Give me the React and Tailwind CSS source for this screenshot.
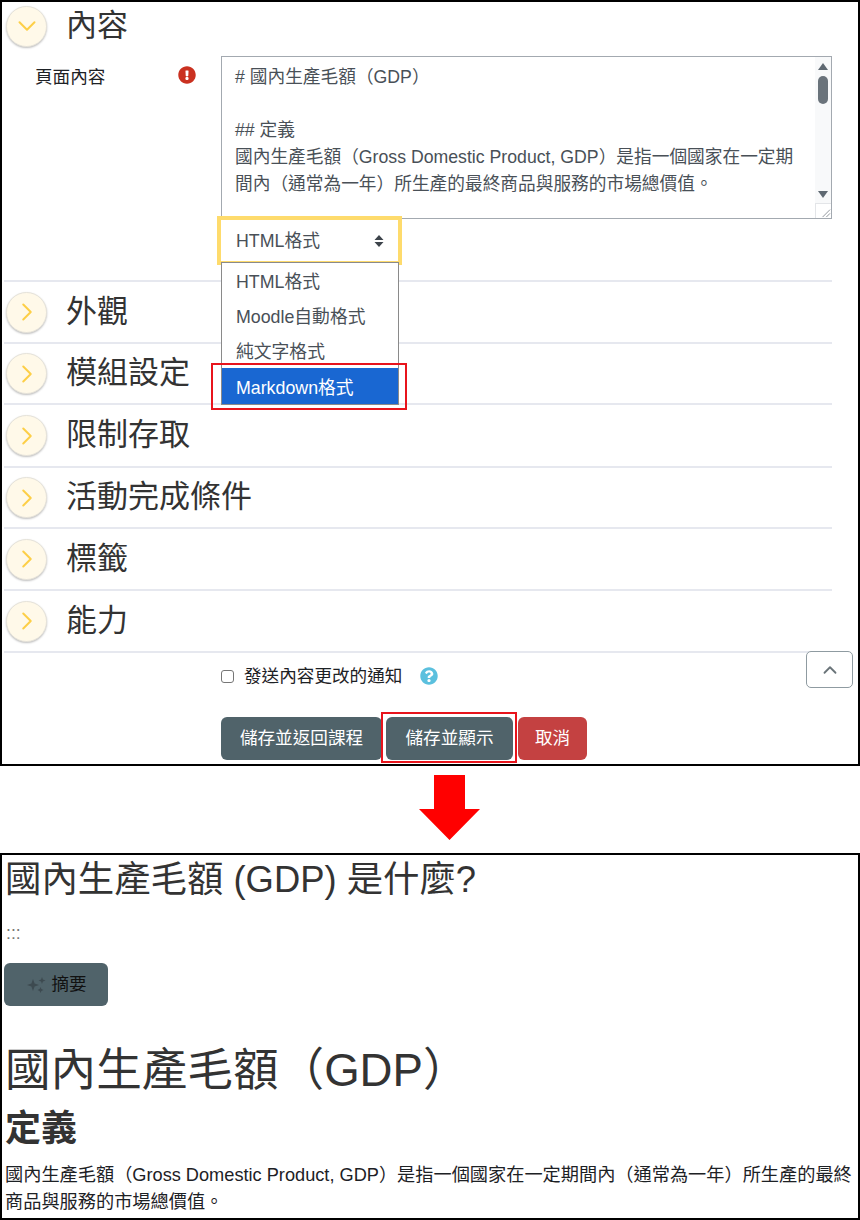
import { ChevronDown, ChevronRight, ChevronUp } from 'lucide-react'
import { FaExclamationCircle, FaQuestionCircle } from 'react-icons/fa'

const FONT = "font-['Liberation_Sans','Noto_Sans_CJK_TC',sans-serif]"

function Circle({ open }) {
  const Icon = open ? ChevronDown : ChevronRight
  return (
    <span className="flex h-[41px] w-[41px] shrink-0 items-center justify-center rounded-full border border-[#e6e3da] bg-[#fff9e9] shadow-[0_1px_2px_rgba(0,0,0,0.25)]">
      <Icon size={30} strokeWidth={1.6} className="text-[#fdcf47]" />
    </span>
  )
}

function Section({ title, height, open }) {
  return (
    <div className={`flex items-center gap-[19px] border-t-2 border-[#e6e8ef] pl-[2px] ${height}`}>
      <Circle open={open} />
      <span className="pb-[2px] text-[31px] leading-none text-[#333333]">{title}</span>
    </div>
  )
}

function Sparkles() {
  return (
    <svg width="22" height="20" viewBox="0 0 22 20" fill="#3d4a50">
      <path d="M8 4 L9.6 8.4 L14 10 L9.6 11.6 L8 16 L6.4 11.6 L2 10 L6.4 8.4 Z" />
      <path d="M17 2 L17.9 4.6 L20.5 5.5 L17.9 6.4 L17 9 L16.1 6.4 L13.5 5.5 L16.1 4.6 Z" />
      <path d="M15.5 12 L16.4 14.1 L18.5 15 L16.4 15.9 L15.5 18 L14.6 15.9 L12.5 15 L14.6 14.1 Z" />
    </svg>
  )
}

function Editor() {
  return (
    <div className="relative h-[163px] w-[611px] border border-[#a3a9b0] bg-white pl-[13px] pt-[7px] text-[17.7px] leading-[26.7px] text-[#495057]">
      <div># 國內生產毛額（GDP）</div>
      <div className="h-[26.7px]" />
      <div>## 定義</div>
      <div className="w-[570px]">
        國內生產毛額（Gross Domestic Product, GDP）是指一個國家在一定期間內（通常為一年）所生產的最終商品與服務的市場總價值。
      </div>
      {/* fake scrollbar */}
      <div className="absolute bottom-0 right-0 top-0 flex w-[16px] flex-col items-center bg-[#f8f9fa] pt-[6px]">
        <svg width="10" height="7" viewBox="0 0 10 7" fill="#5f6972">
          <path d="M5 0 L10 7 L0 7 Z" />
        </svg>
        <div className="mt-[6px] h-[28px] w-[10px] shrink-0 rounded-full bg-[#6a737b]" />
        <svg width="10" height="7" viewBox="0 0 10 7" fill="#5f6972" className="mt-[87px] shrink-0">
          <path d="M0 0 L10 0 L5 7 Z" />
        </svg>
        <svg width="16" height="15" viewBox="0 0 16 15" stroke="#8b9198" className="mt-[5px] shrink-0 border-l border-t border-[#e3e5e8] bg-white">
          <path d="M7 14 L15 6 M11 14 L15 10" />
        </svg>
      </div>
    </div>
  )
}

function FormatSelect() {
  return (
    <div className="relative z-10 -ml-[4px] -mt-[3px] h-[49px] w-[185px]">
      <div className="flex h-full items-center justify-between border-4 border-[#fedb6c] bg-white pl-[15px] pr-[14px] pt-px text-[17.8px] text-[#495057]">
        <span>HTML格式</span>
        <svg width="10" height="12" viewBox="0 0 10 12" fill="#3d444b">
          <path d="M5 0 L9.5 5 L0.5 5 Z M0.5 7 L9.5 7 L5 12 Z" />
        </svg>
      </div>
      {/* open dropdown */}
      <div className="absolute left-[4px] top-[46px] w-[178px] border border-[#8a8a8a] bg-white text-[17.8px] text-[#495057]">
        <div className="flex h-[35px] items-center pl-[14px] pt-[3px]">HTML格式</div>
        <div className="flex h-[35px] items-center pl-[14px] pt-[3px]">Moodle自動格式</div>
        <div className="flex h-[35px] items-center pl-[14px] pt-[3px]">純文字格式</div>
        <div className="flex h-[36px] items-center bg-[#1967d2] pl-[14px] pt-[4px] text-white">Markdown格式</div>
      </div>
      <div className="absolute left-[-6px] top-[147px] h-[47px] w-[196px] border-2 border-[#e8141c]" />
    </div>
  )
}

function EditPanel() {
  return (
    <div className="relative h-[766px] w-[860px] overflow-hidden border-2 border-black bg-white">
      <div className="ml-[2px] w-[828px]">
        <div className="h-[278px]">
          <div className="flex h-[52px] items-center gap-[19px] pl-[2px] pb-[4px]">
            <Circle open />
            <span className="pb-[2px] text-[31px] leading-none text-[#333333]">內容</span>
          </div>
          <div className="flex">
            <div className="flex w-[217px] items-start pl-[31px] pt-[12px]">
              <span className="w-[143px] text-[17.6px] leading-[22px] text-[#1d2125]">頁面內容</span>
              <FaExclamationCircle size={18} className="text-[#ca3120]" />
            </div>
            <div className="pt-[2px]">
              <Editor />
              <FormatSelect />
            </div>
          </div>
        </div>
        <Section title="外觀" height="h-[62px]" />
        <Section title="模組設定" height="h-[61px]" />
        <Section title="限制存取" height="h-[63px]" />
        <Section title="活動完成條件" height="h-[61px]" />
        <Section title="標籤" height="h-[62px]" />
        <Section title="能力" height="h-[62px]" />
        <div className="flex h-[64px] items-center border-t-2 border-[#e6e8ef] pb-[16px] pl-[217px]">
          <span className="h-[13px] w-[13px] rounded-[3px] border border-[#767676] bg-white" />
          <span className="ml-[10px] text-[17.6px] text-[#1d2125]">發送內容更改的通知</span>
          <FaQuestionCircle size={18} className="ml-[18px] text-[#5bc0de]" />
        </div>
      </div>

      <div className="ml-[219px] mt-[2px] flex gap-[4px]">
        <button className="h-[43px] w-[161px] rounded-[6px] bg-[#50636a] text-[17.6px] text-white">
          儲存並返回課程
        </button>
        <button className="h-[43px] w-[127px] rounded-[6px] bg-[#50636a] text-[17.6px] text-white">
          儲存並顯示
        </button>
        <button className="ml-px h-[43px] w-[69px] rounded-[6px] bg-[#c44141] text-[17.6px] text-white">
          取消
        </button>
      </div>

      {/* overlays */}
      <div className="absolute left-[379px] top-[710px] h-[51px] w-[136px] border-2 border-[#e8141c]" />
      <button className="absolute left-[804px] top-[649px] flex h-[37px] w-[47px] items-center justify-center rounded-[5px] border border-[#8f9ba1] bg-white">
        <ChevronUp size={22} className="text-[#6a7479]" />
      </button>
    </div>
  )
}

function ResultPanel() {
  return (
    <div className="h-[367px] w-[860px] overflow-hidden border-2 border-black bg-white pl-[2px] pr-[2px] text-[#333333]">
      <h2 className="pl-px pt-[5px] text-[36.4px] leading-[40px]">國內生產毛額 (GDP) 是什麼?</h2>
      <div className="mt-[22px] pl-[2px] text-[17.6px] leading-[22px] text-[#777777]">:::</div>
      <button className="mt-[19px] flex h-[43px] w-[104px] items-center justify-center gap-[4px] rounded-[6px] bg-[#50636a] text-[17.6px] text-[#111111]">
        <Sparkles />
        摘要
      </button>
      <h1 className="mt-[36px] pl-px text-[45.6px] leading-[58px]">國內生產毛額（GDP）</h1>
      <h2 className="mt-[7px] pl-px text-[36px] font-bold leading-[44px]">定義</h2>
      <p className="mt-[11px] pl-px text-[18.2px] leading-[26.5px] text-[#1d2125]">
        國內生產毛額（Gross Domestic Product, GDP）是指一個國家在一定期間內（通常為一年）所生產的最終商品與服務的市場總價值。
      </p>
    </div>
  )
}

export default function App() {
  return (
    <div className={`h-[1220px] w-[860px] overflow-hidden bg-white ${FONT}`}>
      <EditPanel />
      <div className="flex h-[87px] justify-center pl-[39px] pt-[9px]">
        <svg width="61" height="65" viewBox="0 0 61 65" fill="#ff0000">
          <path d="M15 0 H46 V34 H61 L30.5 65 L0 34 H15 Z" />
        </svg>
      </div>
      <ResultPanel />
    </div>
  )
}
